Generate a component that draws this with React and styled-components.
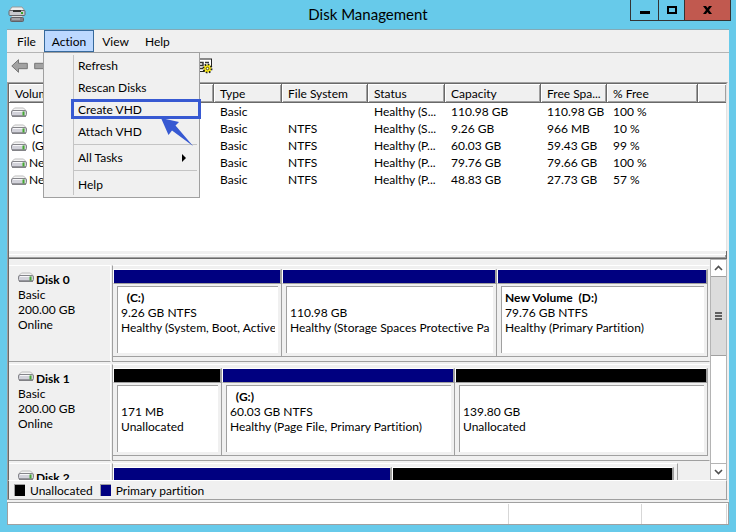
import React from "react";
import styled, { createGlobalStyle } from "styled-components";

const FACE = "#f0f0f0";
const SHADOW = "#a0a0a0";
const DARK = "#696969";
const NAVY = "#000080";

const GlobalStyle = createGlobalStyle`
  * { box-sizing: border-box; }
  body {
    margin: 0;
    background: #67caea;
    color: #000;
    font: 12px/15px Lato, "Open Sans", sans-serif;
    font-variant-ligatures: none;
  }
  button {
    font: inherit;
    font-variant-ligatures: none;
    color: inherit;
    background: none;
    border: 0;
    padding: 0;
  }
`;

const Window = styled.div`
  display: flex;
  flex-direction: column;
  height: 100vh;
  padding: 0 7px 7px;
`;

const TitleBar = styled.header`
  flex: none;
  display: grid;
  grid-template-columns: 101px 1fr 101px;
  height: 29px;
`;

const AppIcon = styled.svg`
  margin: 6px 0 0 1px;
`;

const Title = styled.h1`
  margin: 0;
  font-size: 15px;
  font-weight: 400;
  line-height: 29px;
  text-align: center;
`;

const WindowButtons = styled.div`
  display: flex;
  height: 21px;
  border: 1px solid #333;
  border-top: 0;
  margin-right: -2px;
  margin-left: 2px;
`;

const WindowButton = styled.button`
  display: flex;
  align-items: center;
  justify-content: center;
  width: ${(p) => p.$width}px;
  background: ${(p) => (p.$danger ? "#c1594f" : "transparent")};
  & + & { border-left: 1px solid #333; }
`;

const Client = styled.main`
  flex: 1;
  min-height: 0;
  display: flex;
  flex-direction: column;
  background: ${FACE};
  border-top: 1px solid #84aab6;
`;

const MenuBar = styled.nav`
  flex: none;
  position: relative;
  display: flex;
  height: 23px;
  padding-left: 2px;
  border-bottom: 1px solid #b4b4b4;
`;

const MenuBarButton = styled.button`
  height: 22px;
  padding: 0 ${(p) => (p.$active ? 7 : 8)}px;
  ${(p) =>
    p.$active &&
    `background: #bcd8ff; border: 1px solid #36699c; padding-top: 1px;`}
`;

const DropDown = styled.div`
  position: absolute;
  z-index: 2;
  left: 36px;
  top: 22px;
  width: 157px;
  padding: 2px;
  background: ${FACE};
  border: 1px solid ${SHADOW};
`;

const MenuGroup = styled.div`
  margin-left: 27px;
  border-left: 1px solid #c4c4c4;
  &:first-child { padding-bottom: 1px; }
  & + & > :first-child { border-top: 1px solid #c4c4c4; padding-top: 2px; height: 26px; }
  & + & + & > :first-child { padding-bottom: 0; height: 25px; }
`;

const MenuItem = styled.button`
  display: flex;
  align-items: center;
  justify-content: space-between;
  width: 100%;
  height: 22px;
  padding: 0 11px 2px 4px;
  text-align: left;
`;

const Highlight = styled.div`
  position: absolute;
  left: 27px;
  top: 46px;
  width: 130px;
  height: 20px;
  border: 3px solid #3759d2;
`;

const Pointer = styled.svg`
  position: absolute;
  left: 117px;
  top: 65px;
`;

const ToolBar = styled.div`
  flex: none;
  display: flex;
  align-items: center;
  gap: 6px;
  height: 29px;
  padding: 0 4px 4px;
`;

const ToolButton = styled.button`
  display: flex;
  & + &:last-child { margin-left: 141px; }
`;

const Sunken = styled.section`
  flex: 1;
  min-height: 0;
  display: flex;
  flex-direction: column;
  margin: 0 1px 0 0;
  border: 1px solid ${SHADOW};
  border-right-color: ${FACE};
`;

const VolumePane = styled.div`
  flex: none;
  min-height: 168px;
  background: #fff;
  border-top: 1px solid ${DARK};
  border-left: 1px solid ${DARK};
  border-right: 1px solid #e3e3e3;
`;

const VolumeTable = styled.table`
  width: 100%;
  table-layout: fixed;
  border-collapse: separate;
  border-spacing: 0;

  th, td {
    padding: 0 0 0 6px;
    font-weight: 400;
    text-align: left;
    white-space: nowrap;
    overflow: hidden;
    text-overflow: ellipsis;
  }
  th {
    height: 19px;
    background: ${FACE};
    border-right: 1px solid ${DARK};
    border-bottom: 1px solid ${DARK};
    box-shadow: inset 1px 1px #fff, inset -1px -1px ${SHADOW};
  }
  th:last-child { border-right: 0; }
  td { height: 17px; }
  td:first-child { padding-left: 2px; }
`;

const Col = styled.col`
  width: ${(p) => (p.$width ? p.$width + "px" : "auto")};
`;

const VolumeName = styled.span`
  display: flex;
  align-items: center;
  gap: 2px;
  white-space: pre;
`;

const Splitter = styled.div`
  flex: none;
  height: 8px;
  background: ${FACE};
  border: 1px solid ${DARK};
  border-top: 0;
  box-shadow: inset 0 3px ${FACE}, inset 0 4px #fff, inset 0 -1px ${SHADOW}, inset -1px 0 ${SHADOW};
`;

const DiskPane = styled.div`
  flex: 1;
  min-height: 0;
  display: flex;
  border-left: 1px solid ${DARK};
`;

const DiskList = styled.div`
  flex: 1;
  min-width: 0;
  overflow: hidden;
  padding-top: 6px;
`;

const DiskRow = styled.article`
  display: flex;
  height: 97px;
  margin-bottom: 2px;
`;

const DiskLabel = styled.div`
  flex: none;
  width: 102px;
  padding: 6px 0 0 9px;
  border-top: 1px solid #fff;
  border-right: 1px solid #fff;
  border-bottom: 1px solid ${SHADOW};
`;

const DiskName = styled.h2`
  display: flex;
  gap: 2px;
  margin: 0;
  font-size: 12px;
  line-height: 15px;
`;

const Partitions = styled.div`
  flex: 1;
  min-width: 0;
  display: flex;
  margin-left: 1px;
  margin-right: ${(p) => p.$inset}px;
  padding: 3px ${(p) => (p.$inset ? 3 : 1)}px 4px 0;
  border: 1px solid ${SHADOW};
  border-top-color: #fff;
  border-right-color: ${(p) => (p.$inset ? SHADOW : "transparent")};
`;

const Partition = styled.div`
  flex: ${(p) => p.$size} 1 0;
  min-width: 0;
  display: flex;
  flex-direction: column;
  border-bottom: 1px solid ${SHADOW};
`;

const Stripe = styled.div`
  height: 15px;
  background: ${(p) => (p.$unallocated ? "#000" : NAVY)};
  border: 1px solid #fff;
  border-right: 2px solid ${SHADOW};
  border-bottom-color: ${SHADOW};
`;

const PartitionBody = styled.div`
  flex: 1;
  display: flex;
  padding: 2px 3px 3px 4px;
  border-right: 1px solid ${SHADOW};
`;

const PartitionInfo = styled.div`
  flex: 1;
  min-width: 0;
  padding: 3px 3px 0;
  background: #fff;
  border-top: 1px solid ${SHADOW};
  border-left: 1px solid ${SHADOW};
`;

const Line = styled.div`
  height: 15px;
  overflow: hidden;
  white-space: pre;
  font-weight: ${(p) => (p.$bold ? 700 : 400)};
`;

const ScrollBar = styled.div`
  flex: none;
  display: flex;
  flex-direction: column;
  width: 17px;
  background: #fff;
  border: 1px solid #b4b4b4;
`;

const ScrollButton = styled.button`
  display: flex;
  align-items: center;
  justify-content: center;
  height: 16px;
  &:last-child { margin-top: auto; border-top: 1px solid #b4b4b4; }
`;

const Thumb = styled.div`
  display: flex;
  flex-direction: column;
  align-items: center;
  justify-content: center;
  gap: 1px;
  height: 80px;
  background: #dcdcdc;
  border-top: 1px solid ${SHADOW};
  border-bottom: 1px solid ${SHADOW};
`;

const Grip = styled.span`
  width: 7px;
  height: 2px;
  background: #606060;
`;

const Legend = styled.footer`
  flex: none;
  display: flex;
  gap: 7px;
  align-items: center;
  height: 19px;
  padding-left: 5px;
  border-top: 1px solid #fff;
  border-left: 1px solid ${DARK};
  border-right: 1px solid ${SHADOW};
`;

const LegendItem = styled.span`
  display: flex;
  align-items: center;
  gap: 5px;
`;

const Swatch = styled.i`
  width: 11px;
  height: 12px;
  background: ${(p) => p.$color};
  border-top: 1px solid ${SHADOW};
  border-left: 1px solid ${SHADOW};
`;

const StatusBar = styled.footer`
  flex: none;
  display: grid;
  grid-template-columns: 1fr 133px 85px;
  height: 23px;
  margin-top: 2px;
  padding: 1px 1px 0 0;
  background: #fff;
  border: 1px solid ${SHADOW};
`;

const StatusPanel = styled.div`
  border-right: 1px solid #d7d7d7;
`;

const DriveIcon = () => (
  <svg width="16" height="10" viewBox="0 0 16 10" aria-hidden="true">
    <path d="M3.500 1.500h9l2 2h-13z" fill="#f4f4f4" />
    <path d="M1 3.500 3.500 1h9L15 3.500" fill="none" stroke="#bcbcbc" />
    <rect x=".5" y="3.500" width="15" height="5.500" rx="1.500" fill="#d2d2da" stroke="#85858a" />
    <path d="M1 9.200h14" stroke="#66666a" />
    <path d="M2 4.500h10" stroke="#f6f6f8" />
    <path d="M12.500 4.500v4" stroke="#45a832" strokeWidth="2" />
  </svg>
);

const NavArrow = ({ flip }) => (
  <svg width="17" height="14" viewBox="0 0 17 14" aria-hidden="true">
    <path
      d={flip ? "M16.2 7 9.5.7v3.600H.7v5.400h8.800v3.600z" : "M.8 7 7.500.7v3.600h8.800v5.400H7.500v3.600z"}
      fill="#a2a2a2"
      stroke="#767676"
    />
  </svg>
);

const SettingsIcon = () => (
  <svg width="15" height="16" viewBox="0 0 15 16" aria-hidden="true">
    <path d="M0 1.500h13V14H0z" fill="#fff" />
    <path d="M0 1h14M13.500 1v8M0 13.500h7" stroke="#222" fill="none" />
    <path d="M1 4.500h4v3H1zM7 4.500h4M1 10.500h4" stroke="#333" strokeWidth="1.500" fill="none" />
    <circle cx="9.500" cy="10.500" r="4" fill="#f5e51b" stroke="#222" strokeWidth="2" strokeDasharray="1.600 1.500" />
    <circle cx="9.500" cy="10.500" r="3" fill="#f5e51b" />
    <circle cx="9.500" cy="10.500" r="1.300" fill="#fff" stroke="#55500a" />
  </svg>
);

const columns = [
  ["Volume", 205],
  ["Type", 68],
  ["File System", 86],
  ["Status", 77],
  ["Capacity", 96],
  ["Free Spa...", 66],
  ["% Free", 91],
  ["", 0],
];

const volumes = [
  ["", "Basic", "", "Healthy (S...", "110.98 GB", "110.98 GB", "100 %"],
  [" (C:)", "Basic", "NTFS", "Healthy (S...", "9.26 GB", "966 MB", "10 %"],
  [" (G:)", "Basic", "NTFS", "Healthy (P...", "60.03 GB", "59.43 GB", "99 %"],
  ["New Volume", "Basic", "NTFS", "Healthy (P...", "79.76 GB", "79.66 GB", "100 %"],
  ["New Volume", "Basic", "NTFS", "Healthy (P...", "48.83 GB", "27.73 GB", "57 %"],
];

const disks = [
  {
    name: "Disk 0",
    details: ["Basic", "200.00 GB", "Online"],
    partitions: [
      { size: 169, lines: ["  (C:)", "9.26 GB NTFS", "Healthy (System, Boot, Active"] },
      { size: 215, lines: ["", "110.98 GB", "Healthy (Storage Spaces Protective Pa"] },
      { size: 211, lines: ["New Volume  (D:)", "79.76 GB NTFS", "Healthy (Primary Partition)"] },
    ],
  },
  {
    name: "Disk 1",
    details: ["Basic", "200.00 GB", "Online"],
    partitions: [
      { size: 109, unallocated: true, lines: ["", "171 MB", "Unallocated"] },
      { size: 233, lines: ["  (G:)", "60.03 GB NTFS", "Healthy (Page File, Primary Partition)"] },
      { size: 253, unallocated: true, lines: ["", "139.80 GB", "Unallocated"] },
    ],
  },
  {
    name: "Disk 2",
    details: [],
    inset: 32,
    partitions: [
      { size: 279, lines: [] },
      { size: 282, unallocated: true, lines: [] },
    ],
  },
];

function ActionMenu() {
  return (
    <DropDown role="menu">
      <MenuGroup>
        <MenuItem role="menuitem">Refresh</MenuItem>
        <MenuItem role="menuitem">Rescan Disks</MenuItem>
        <MenuItem role="menuitem">Create VHD</MenuItem>
        <MenuItem role="menuitem">Attach VHD</MenuItem>
      </MenuGroup>
      <MenuGroup>
        <MenuItem role="menuitem">
          All Tasks
          <svg width="4" height="8" viewBox="0 0 4 8" aria-hidden="true">
            <path d="M0 0l4 4-4 4z" />
          </svg>
        </MenuItem>
      </MenuGroup>
      <MenuGroup>
        <MenuItem role="menuitem">Help</MenuItem>
      </MenuGroup>
      <Highlight />
      <Pointer width="33" height="29" viewBox="0 0 33 29" aria-hidden="true">
        <path d="M0 0l18 4-3.500 3.500L32 28 11 12.500 7.500 17z" fill="#3759d2" />
      </Pointer>
    </DropDown>
  );
}

function Disk({ disk }) {
  return (
    <DiskRow>
      <DiskLabel>
        <DiskName>
          <DriveIcon />
          {disk.name}
        </DiskName>
        {disk.details.map((text) => <Line key={text}>{text}</Line>)}
      </DiskLabel>
      <Partitions $inset={disk.inset || 0}>
        {disk.partitions.map((part, i) => (
          <Partition key={i} $size={part.size}>
            <Stripe $unallocated={part.unallocated} />
            <PartitionBody>
              <PartitionInfo>
                {part.lines.map((text, n) => (
                  <Line key={n} $bold={n === 0}>{text}</Line>
                ))}
              </PartitionInfo>
            </PartitionBody>
          </Partition>
        ))}
      </Partitions>
    </DiskRow>
  );
}

export default function App() {
  return (
    <Window>
      <GlobalStyle />
      <TitleBar>
        <AppIcon width="18" height="17" viewBox="0 0 18 17" aria-hidden="true">
          <path d="M4 1h10l3 4H1z" fill="#eee" stroke="#999" />
          <rect x="1" y="4.500" width="16" height="5" rx="1" fill="#c9c9ce" stroke="#66666c" />
          <path d="M5 5h8" stroke="#333" strokeWidth="2" />
          <path d="M14 6v2" stroke="#38a828" strokeWidth="2" />
          <path d="M4 10h10l1 2H3z" fill="#ddd" />
          <rect x="2.500" y="11.500" width="13" height="4" rx="1" fill="#808086" stroke="#606066" />
          <path d="M4 13h8" stroke="#c8c8cc" />
        </AppIcon>
        <Title>Disk Management</Title>
        <WindowButtons>
          <WindowButton $width={28} aria-label="Minimize">
            <svg width="10" height="8" viewBox="0 0 10 8"><path d="M0 5h10v3H0z" /></svg>
          </WindowButton>
          <WindowButton $width={26} aria-label="Maximize">
            <svg width="10" height="8" viewBox="0 0 10 8">
              <path d="M1 1h8v6H1z" fill="none" stroke="#000" strokeWidth="2" />
            </svg>
          </WindowButton>
          <WindowButton $width={47} $danger aria-label="Close">
            <svg width="9" height="8" viewBox="0 0 9 8">
              <path d="M0 0h3l1.500 2L6 0h3L6 4l3 4H6L4.500 6 3 8H0l3-4z" />
            </svg>
          </WindowButton>
        </WindowButtons>
      </TitleBar>

      <Client>
        <MenuBar>
          <MenuBarButton>File</MenuBarButton>
          <MenuBarButton $active aria-expanded="true">Action</MenuBarButton>
          <MenuBarButton>View</MenuBarButton>
          <MenuBarButton>Help</MenuBarButton>
          <ActionMenu />
        </MenuBar>

        <ToolBar>
          <ToolButton aria-label="Back"><NavArrow /></ToolButton>
          <ToolButton aria-label="Forward"><NavArrow flip /></ToolButton>
          <ToolButton aria-label="Settings"><SettingsIcon /></ToolButton>
        </ToolBar>

        <Sunken>
          <VolumePane>
            <VolumeTable>
              <colgroup>
                {columns.map(([name, width]) => <Col key={name} $width={width} />)}
              </colgroup>
              <thead>
                <tr>{columns.map(([name]) => <th key={name} scope="col">{name}</th>)}</tr>
              </thead>
              <tbody>
                {volumes.map(([name, ...cells], i) => (
                  <tr key={i}>
                    <td><VolumeName><DriveIcon />{name}</VolumeName></td>
                    {cells.map((text, n) => <td key={n}>{text}</td>)}
                    <td />
                  </tr>
                ))}
              </tbody>
            </VolumeTable>
          </VolumePane>
          <Splitter />
          <DiskPane>
            <DiskList>
              {disks.map((disk) => <Disk key={disk.name} disk={disk} />)}
            </DiskList>
            <ScrollBar>
              <ScrollButton aria-label="Scroll up">
                <svg width="9" height="6" viewBox="0 0 9 6">
                  <path d="M1 5l3.500-3.500L8 5" fill="none" stroke="#505050" strokeWidth="1.600" />
                </svg>
              </ScrollButton>
              <Thumb><Grip /><Grip /><Grip /></Thumb>
              <ScrollButton aria-label="Scroll down">
                <svg width="9" height="6" viewBox="0 0 9 6">
                  <path d="M1 1l3.500 3.500L8 1" fill="none" stroke="#505050" strokeWidth="1.600" />
                </svg>
              </ScrollButton>
            </ScrollBar>
          </DiskPane>
          <Legend>
            <LegendItem><Swatch $color="#000" />Unallocated</LegendItem>
            <LegendItem><Swatch $color={NAVY} />Primary partition</LegendItem>
          </Legend>
        </Sunken>

        <StatusBar>
          <StatusPanel />
          <StatusPanel />
          <StatusPanel />
        </StatusBar>
      </Client>
    </Window>
  );
}
